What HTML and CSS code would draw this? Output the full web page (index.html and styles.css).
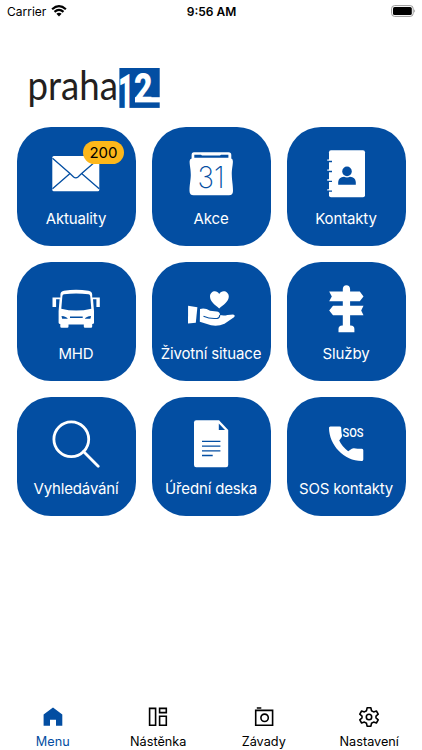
FILE: index.html
```html
<!DOCTYPE html>
<html lang="cs">
<head>
  <meta charset="UTF-8">
  <meta name="viewport" content="width=device-width, initial-scale=1.0">
  <title>Praha 12</title>
  <link rel="stylesheet" href="styles.css">
</head>
<body>
  <div class="status-bar">
    <div class="carrier">
      <span>Carrier</span>
      <svg class="wifi" width="16" height="12" viewBox="0 0 16 12">
        <path d="M1.1 4.2Q8-1.9 14.9 4.2M3.5 6.8Q8 3 12.5 6.8" fill="none" stroke="#000" stroke-width="2.2"/>
        <path d="M5.4 8.7Q8 6.7 10.6 8.7L8 11.4Z"/>
      </svg>
    </div>
    <div class="time">9:56 AM</div>
    <svg class="battery" width="25" height="12" viewBox="0 0 25 12">
      <rect x=".6" y=".6" width="21.6" height="10.8" rx="3" fill="#fff" stroke="#999" stroke-width="1"/>
      <rect x="2" y="2" width="18.8" height="8" rx="1.6"/>
      <path d="M23.3 4.2Q25 6 23.3 7.8Z" fill="#888"/>
    </svg>
  </div>

  <header class="header">
    <svg class="logo" width="144" height="60" viewBox="0 0 144 60">
      <text class="logo-name" x="7.5" y="41.5" textLength="90.5" lengthAdjust="spacingAndGlyphs">praha</text>
      <rect x="99.4" y="10" width="40.3" height="39.9" fill="#034ea2"/>
      <text class="logo-one" x="98" y="50" textLength="16" lengthAdjust="spacingAndGlyphs">1</text>
      <text class="logo-two" x="114" y="44.4" textLength="18.5" lengthAdjust="spacingAndGlyphs">2</text>
      <rect x="115" y="39.2" width="25" height="5.2" fill="#fff"/>
    </svg>
  </header>

  <main class="grid">
    <a class="tile">
      <svg class="icon" viewBox="0 0 48 48">
        <rect x=".3" y="6" width="47" height="35.2" rx="1.5"/>
        <path class="cut" d="M.5 8.2L18 23.6L21.6 27Q23.8 28.8 26 27L29.6 23.6L47.2 8.2M18 23.6L.5 38.8M29.6 23.6L47.2 38.8"/>
      </svg>
      <span class="label">Aktuality</span>
      <span class="badge">200</span>
    </a>
    <a class="tile">
      <svg class="icon" viewBox="0 0 48 48">
        <path d="M7 2.3H41.5Q44.3 2.3 44.3 5V8.6Q46 9 45.9 11.5C45.8 16 44.7 19 44.8 25C44.9 31 46 34 46 41Q46 45.2 42 45.2H6.6Q2.5 45.2 2.5 41C2.5 34 3.7 31 3.8 25C3.8 19 2.7 16 2.6 11.5Q2.5 9 4.6 8.6V5Q4.6 2.3 7 2.3Z"/>
        <path d="M7.3 4.8H14L15 5.4H33L34 4.8H41.4V7.8H7.3Z" fill="#034ea2"/>
        <text class="day" x="10.6" y="38" textLength="27" lengthAdjust="spacingAndGlyphs">31</text>
      </svg>
      <span class="label">Akce</span>
    </a>
    <a class="tile">
      <svg class="icon" viewBox="0 0 48 48">
        <rect x="7" y=".2" width="36" height="47" rx="2"/>
        <path d="M5.3 10.2H9M5.3 20.2H9M5.3 30H9M5.3 39.8H9" fill="none" stroke="#fff" stroke-width="1.3"/>
        <path class="cut" d="M6.5 11.5H10M6.5 21.5H10M6.5 31.3H10M6.5 41.1H10"/>
        <circle cx="25" cy="21.4" r="4.8" fill="#034ea2"/>
        <path d="M16.2 34.8V32Q16.7 27.2 22 26.8Q25 28.3 28 26.8Q33.3 27.2 33.8 32V34.8Z" fill="#034ea2"/>
      </svg>
      <span class="label">Kontakty</span>
    </a>
    <a class="tile">
      <svg class="icon" viewBox="0 0 48 48">
        <path fill-rule="evenodd" d="M12 5.7Q24 3.9 36.4 5.7Q40 6.3 40.2 9.5V12.4H47.8V22H44.4V14.2H41L42 26V37.8Q42 39 40.2 39V41.5Q40.2 42.7 39 42.7H33Q31.8 42.7 31.8 41.5V39.4H16.5V41.5Q16.5 42.7 15.3 42.7H9.5Q8.3 42.7 8.3 41.5V39Q6.6 39 6.6 37.8V26L7.6 14.2H4.1V22H.5V12.4H8.4V9.5Q8.5 6.3 12 5.7ZM12 9.2Q10.6 9.4 10.4 11L9.3 23.7Q24 27.5 39.3 23.7L38.2 11Q38 9.4 36.5 9.2Q24 7.6 12 9.2ZM9.5 31L10.2 33.8H15.8Q14.6 31.5 9.5 31ZM39.1 31Q34 31.5 32.8 33.8H38.4ZM18 31.4V33H30.7V31.4Z"/>
      </svg>
      <span class="label">MHD</span>
    </a>
    <a class="tile">
      <svg class="icon" viewBox="0 0 48 48">
        <path d="M32.2 23.4C28 20 23 16.5 23 11.5C23 6 29.7 4.3 32.2 9C34.7 4.3 41.8 6 41.8 11.5C41.8 16.5 36.4 20 32.2 23.4Z"/>
        <path d="M1.1 20.8L10.4 22.2L8.8 37.8L1 38.6Z"/>
        <path d="M13 24Q18.2 22.6 23 25.8L29.6 26.4Q33.4 27 32.8 30Q37 31 40.5 29.9L46 29.5Q48.8 30.2 47 32.2L37.5 38.7Q31 41.8 24 40.3L12.8 36.8Z"/>
        <path d="M16.5 31.2Q23 34.2 30.4 33.4Q32.6 32.9 32.8 30" fill="none" stroke="#034ea2" stroke-width="1.1"/>
      </svg>
      <span class="label">Životní situace</span>
    </a>
    <a class="tile">
      <svg class="icon" viewBox="0 0 48 48">
        <path d="M20.8 6.5V4Q21 .2 24.4 .2Q27.9 .2 28.1 4V6.5H37.8L41.5 11.4L37.8 16.2H28.1V20.8H41.5L39.2 25.6L41.5 30.2H28.1V40.5Q32.4 40.2 32.4 44V47.2H16.5V44Q16.5 40.2 20.8 40.5V30.2H11L7.2 25.6L11 20.8H20.8V16.2H7.2L9.8 11.4L7.2 6.5Z"/>
      </svg>
      <span class="label">Služby</span>
    </a>
    <a class="tile">
      <svg class="icon" viewBox="0 0 48 48">
        <circle class="line" cx="19.3" cy="19.2" r="17.4"/>
        <path class="line" d="M31.5 31.5L46.2 46.2"/>
      </svg>
      <span class="label">Vyhledávání</span>
    </a>
    <a class="tile">
      <svg class="icon" viewBox="0 0 48 48">
        <path d="M9.2 .2H32L41.2 10V45Q41.2 47.2 39 47.2H9.2Q7 47.2 7 45V2.4Q7 .2 9.2 .2Z"/>
        <path d="M31.8 3.5V10H38Z" fill="#034ea2"/>
        <path class="cut" d="M15 21.3H33.4M15 26.1H33.4M15 30.9H33.4M15 35.5H25.7"/>
      </svg>
      <span class="label">Úřední deska</span>
    </a>
    <a class="tile">
      <svg class="icon" viewBox="0 0 48 48">
        <path d="M8.3 6.4H17.6Q19 6.4 19.2 7.8Q19.2 11.5 20 15.4Q20.2 16.6 19.4 17.4L17.2 20.6Q20 26.8 26.2 31.2L29.8 28.8Q30.8 28 32 28.2Q36 28.9 40 28.8Q41.3 29 41.3 30.3V39.5Q41.2 41 39.7 41.1C22 41.1 7 25 7 7.8Q7 6.5 8.3 6.4Z"/>
        <text class="sos" x="20.5" y="17.3" textLength="21" lengthAdjust="spacingAndGlyphs">SOS</text>
      </svg>
      <span class="label">SOS kontakty</span>
    </a>
  </main>

  <nav class="tab-bar">
    <a class="tab active">
      <svg width="20" height="20" viewBox="0 0 20 20">
        <path d="M.6 7.5L10 .4L19.3 7.5V18.8H13V12.7H7V18.8H.6Z" fill="#034ea2"/>
      </svg>
      <span>Menu</span>
    </a>
    <a class="tab">
      <svg width="20" height="20" viewBox="0 0 20 20">
        <path class="outline" d="M1.6 1.4H7.6V18.2H1.6ZM11.6 1.4H18.3V5.6H11.6ZM11.6 9.2H18.3V18.2H11.6Z"/>
      </svg>
      <span>Nástěnka</span>
    </a>
    <a class="tab">
      <svg width="20" height="20" viewBox="0 0 20 20">
        <path class="outline" d="M1.7 3.4H18.6V18.2H1.7ZM2.8 1H7.3"/>
        <circle class="outline" cx="10.6" cy="10.8" r="3.7"/>
      </svg>
      <span>Závady</span>
    </a>
    <a class="tab">
      <svg width="20" height="20" viewBox="0 0 20 20">
        <path class="outline" stroke-linejoin="round" d="M8.1 .8H11.9L12.5 3.7L14.6 4.9L17.4 4L19.2 7.2L17 9.1V10.9L19.2 12.8L17.4 16L14.6 15.1L12.5 16.3L11.9 19.2H8.1L7.5 16.3L5.4 15.1L2.6 16L.8 12.8L3 10.9V9.1L.8 7.2L2.6 4L5.4 4.9L7.5 3.7Z"/>
        <circle class="outline" cx="10" cy="10" r="2.7"/>
      </svg>
      <span>Nastavení</span>
    </a>
  </nav>
</body>
</html>
```

FILE: styles.css
```css
* {
  box-sizing: border-box;
}

body {
  margin: 0;
  height: 750px;
  display: flex;
  flex-direction: column;
  background: #fff;
  color: #000;
  font-family: Inter, "Liberation Sans", sans-serif;
  overflow: hidden;
}

.status-bar {
  display: grid;
  grid-template-columns: 1fr auto 1fr;
  align-items: center;
  height: 22px;
  padding: 0 6px 0 7px;
  font-size: 12px;
}

.carrier {
  display: flex;
  align-items: center;
  gap: 5px;
}

.time {
  font-weight: 600;
}

.battery {
  justify-self: end;
}

.header {
  height: 105.4px;
  padding: 36px 0 0 20px;
}

.logo {
  display: block;
  overflow: visible;
}

.logo-name {
  font-family: Lato, sans-serif;
  font-size: 41px;
  fill: #231f20;
}

.logo-one,
.logo-two {
  font-family: Roboto, sans-serif;
  font-weight: 900;
  fill: #fff;
}

.logo-one {
  font-size: 48px;
}

.logo-two {
  font-size: 41px;
}

.grid {
  display: grid;
  grid-template-columns: repeat(3, 119px);
  grid-auto-rows: 119px;
  gap: 16px;
  padding-left: 16.5px;
}

.tile {
  position: relative;
  display: flex;
  flex-direction: column;
  align-items: center;
  padding-top: 22.8px;
  border-radius: 34px;
  background: #034ea2;
  color: #fff;
}

.icon {
  width: 48px;
  height: 48px;
  fill: #fff;
}

.icon .cut {
  fill: none;
  stroke: #034ea2;
  stroke-width: 1.3;
}

.icon .line {
  fill: none;
  stroke: #fff;
  stroke-width: 2.8;
  stroke-linecap: round;
}

.day {
  font-size: 30px;
  font-weight: 200;
  fill: #034ea2;
}

.sos {
  font-family: Roboto, sans-serif;
  font-size: 13.5px;
  font-weight: 500;
}

.label {
  margin-top: 10.5px;
  font-size: 15px;
  letter-spacing: -0.15px;
  line-height: 20px;
  white-space: nowrap;
}

.badge {
  position: absolute;
  top: 14px;
  right: 11.5px;
  width: 41px;
  height: 23px;
  border-radius: 12px;
  background: #fdb71a;
  color: #000;
  font-size: 15px;
  line-height: 23px;
  text-align: center;
}

.tab-bar {
  display: grid;
  grid-template-columns: repeat(4, 1fr);
  margin-top: auto;
  height: 43px;
}

.tab {
  display: flex;
  flex-direction: column;
  align-items: center;
  font-size: 12.7px;
  line-height: 16px;
}

.tab span {
  margin-top: 6.5px;
}

.tab.active {
  color: #034ea2;
}

.outline {
  fill: none;
  stroke: #000;
  stroke-width: 1.6;
}
```
